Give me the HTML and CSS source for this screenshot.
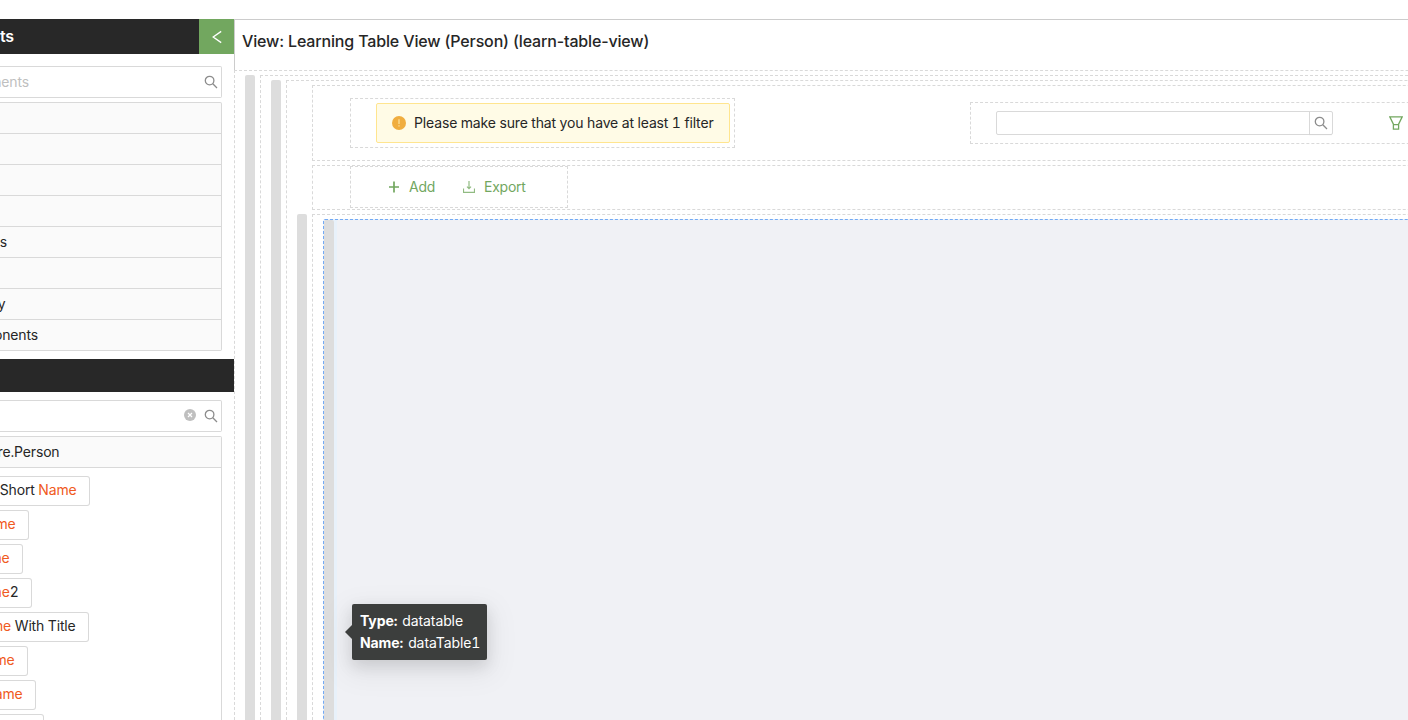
FILE: index.html
```html
<!DOCTYPE html>
<html lang="en">
<head>
<meta charset="utf-8">
<title>View: Learning Table View (Person)</title>
<link rel="stylesheet" href="styles.css">
</head>
<body>
<div class="app">
  <aside class="sidebar">
    <header class="side-head">
      <div class="side-title"><span class="clip e14">ts</span></div>
      <button class="collapse"><svg width="14" height="14" viewBox="0 0 14 14"><path d="M11.2 1.4 3.2 7l8 5.6" fill="none" stroke="#fff" stroke-width="1.3"/></svg></button>
    </header>
    <div class="search">
      <span class="clip e29 muted">nents</span>
      <svg class="lens" viewBox="0 0 14 14"><circle cx="5.6" cy="5.6" r="4.3"/><path d="m8.8 8.8 4.2 4.2"/></svg>
    </div>
    <ul class="groups">
      <li></li><li></li><li></li><li></li>
      <li><span class="clip e7">s</span></li>
      <li></li>
      <li><span class="clip e5">y</span></li>
      <li><span class="clip e38">onents</span></li>
    </ul>
    <div class="side-divider"></div>
    <div class="search">
      <svg class="clear" viewBox="0 0 12 12"><circle cx="6" cy="6" r="6"/><path d="m4 4 4 4M8 4 4 8"/></svg>
      <svg class="lens" viewBox="0 0 14 14"><circle cx="5.6" cy="5.6" r="4.3"/><path d="m8.8 8.8 4.2 4.2"/></svg>
    </div>
    <section class="fields">
      <h3><span class="clip e59">re.Person</span></h3>
      <div class="chips">
        <div class="chip c90"><span>Short <b>Name</b></span></div>
        <div class="chip c29"><span><b>me</b></span></div>
        <div class="chip c23"><span><b>me</b></span></div>
        <div class="chip c32"><span><b>me</b>2</span></div>
        <div class="chip c89"><span><b>me</b> With Title</span></div>
        <div class="chip c28"><span><b>me</b></span></div>
        <div class="chip c36"><span><b>ame</b></span></div>
        <div class="chip c44"></div>
      </div>
    </section>
  </aside>
  <main class="main">
    <h1 class="view-title"><span>View: Learning Table View (Person) (learn-table-view)</span></h1>
    <div class="zone">
      <i class="handle"></i>
      <div class="zone">
        <i class="handle"></i>
        <div class="zone stack">
          <div class="row row-top">
            <div class="cell cell-alert">
              <div class="alert">
                <svg width="14" height="14" viewBox="0 0 14 14"><circle cx="7" cy="7" r="7" fill="#f0ad3f"/><path d="M7 3.3v4.6M7 9.2v1.3" stroke="#fbdf9a" stroke-width="1.3"/></svg>
                <span>Please make sure that you have at least 1 filter</span>
              </div>
            </div>
            <div class="cell cell-search">
              <div class="quick">
                <span class="quick-btn"><svg class="lens" viewBox="0 0 14 14"><circle cx="5.6" cy="5.6" r="4.3"/><path d="m8.8 8.8 4.2 4.2"/></svg></span>
              </div>
              <svg width="14" height="14" viewBox="0 0 14 14" fill="none" stroke="#72a75f" stroke-width="1.3"><path d="M.8.8h12.4L9.6 8.2v5H4.4v-5zM4.4 8.6h5.2"/></svg>
            </div>
          </div>
          <div class="row row-tools">
            <div class="cell cell-tools">
              <span class="tool"><svg width="12" height="12" viewBox="0 0 12 12"><path d="M6 .5v11M1 6h10" stroke="#72a75f" stroke-width="1.7"/></svg><span>Add</span></span>
              <span class="tool"><svg width="12" height="12" viewBox="0 0 12 12" fill="none" stroke="#91bb82" stroke-width="1.2"><path d="M6 0v7.5M4 5.6l2 2 2-2M.5 7.5v3.8h11V7.5"/></svg><span>Export</span></span>
            </div>
          </div>
          <div class="table-wrap">
            <i class="handle"></i>
            <div class="zone table-zone">
              <div class="selected"><i class="handle"></i>
                <div class="table-body"></div>
              </div>
            </div>
          </div>
        </div>
      </div>
    </div>
  </main>
  <div class="tooltip"><div><strong>Type:</strong> datatable</div><div><strong>Name:</strong> dataTable1</div></div>
</div>
</body>
</html>
```
FILE: styles.css
```css
* { box-sizing: border-box; }
html, body { margin: 0; height: 100%; overflow: hidden; }
body { background: #fff; color: #262626; font: 14px/22px Inter, sans-serif; letter-spacing: -0.15px; font-variant-numeric: tabular-nums; }
.app { display: flex; height: 720px; padding-top: 19px; overflow: hidden; position: relative; }
svg { display: block; flex: none; }
b { font-weight: 400; color: #f05a22; }

/* sidebar */
.sidebar { width: 234px; flex: none; overflow: hidden; }
.side-head { display: flex; height: 35px; margin-bottom: 12px; background: #282828; color: #fff; }
.side-title { flex: 1; display: flex; align-items: center; padding-bottom: 2px; font-size: 16px; font-weight: 600; }
.collapse { width: 35px; padding: 0; border: 0; background: #72a75f; display: flex; align-items: center; justify-content: center; }
.clip { display: flex; justify-content: flex-end; white-space: nowrap; flex: none; }
.e5 { width: 5.5px; } .e7 { width: 7px; } .e14 { width: 14px; } .e29 { width: 29px; } .e38 { width: 38px; } .e59 { width: 59.5px; }
.search { display: flex; align-items: center; height: 32px; width: 222px; border: 1px solid #d9d9d9; border-left: 0; border-radius: 0 2px 2px 0; padding-right: 3px; }
.muted { color: #bfbfbf; }
.lens { width: 14px; height: 14px; fill: none; stroke: #8c8c8c; stroke-width: 1.3; }
.search .lens { margin-left: auto; }
.clear { width: 12px; height: 12px; fill: #bfbfbf; margin: -2px 8px 0 auto; }
.clear path { stroke: #fff; stroke-width: 1.2; }
.search .clear + .lens { margin-left: 0; }
.groups { list-style: none; margin: 4px 0 8px; padding: 0; width: 222px; border: 1px solid #d9d9d9; border-left: 0; border-radius: 0 2px 2px 0; background: #fafafa; }
.groups li { height: 31px; display: flex; align-items: center; border-bottom: 1px solid #d9d9d9; }
.groups li:last-child { border-bottom: 0; height: 30px; }
.side-divider { height: 33px; margin-bottom: 8px; background: #282828; }
.fields { margin-top: 4px; width: 222px; height: 400px; border: 1px solid #d9d9d9; border-left: 0; border-top-right-radius: 2px; }
.fields h3 { margin: 0; height: 31px; font-size: 14px; font-weight: 400; display: flex; align-items: center; background: #fafafa; border-bottom: 1px solid #d9d9d9; }
.chips { display: flex; flex-direction: column; gap: 4px; padding-top: 8px; }
.chip { height: 30px; padding-right: 12.4px; padding-bottom: 2px; border: 1px solid #d9d9d9; border-left: 0; border-radius: 0 3px 3px 0; display: flex; align-items: center; justify-content: flex-end; white-space: nowrap; }
.c90 { width: 90px; } .c29 { width: 29px; } .c23 { width: 23px; } .c32 { width: 32px; } .c89 { width: 89px; } .c28 { width: 28px; } .c36 { width: 36px; } .c44 { width: 44px; }

/* canvas */
.main { width: 1500px; flex: none; display: flex; flex-direction: column; }
.view-title { margin: 0; height: 51px; padding: 9px 7px; border-top: 1px solid #ccc; border-left: 1px solid #ccc; font-size: 16px; line-height: 24px; font-weight: 500; letter-spacing: -0.15px; font-variant-numeric: normal; }
.zone { flex: 1; display: flex; gap: 5px; padding: 4px 0 0 10px; border: 1px dashed #d9d9d9; border-bottom: 0; }
.handle { width: 10px; flex: none; background: #ddd; border-radius: 2px 2px 0 0; }
.stack { flex-direction: column; gap: 4px; padding-left: 10px; }
.row { margin-left: 15px; border: 1px dashed #d9d9d9; padding-left: 37px; display: flex; flex: none; }
.row-top { height: 76px; padding-top: 12px; align-items: flex-start; }
.cell { border: 1px dashed #d9d9d9; display: flex; flex: none; }
.cell-alert { width: 385px; height: 50px; padding: 4px 4px 4px 25px; }
.alert { flex: 1; display: flex; align-items: center; gap: 8px; padding-left: 15px; background: #fffbe6; border: 1px solid #ffe58f; border-radius: 2px; white-space: nowrap; }
.cell-search { width: 500px; height: 42px; margin: 4px 0 0 235px; padding-left: 25px; align-items: center; gap: 56px; }
.quick { width: 337px; height: 24px; border: 1px solid #d9d9d9; border-radius: 2px; display: flex; justify-content: flex-end; }
.quick-btn { width: 23px; border-left: 1px solid #d9d9d9; display: flex; align-items: center; justify-content: center; box-shadow: 0 2px 0 rgba(0,0,0,.015); }
.row-tools { height: 45px; }
.cell-tools { width: 218px; height: 42px; padding-left: 37px; align-items: center; gap: 28px; }
.tool { display: flex; align-items: center; gap: 9px; color: #72a75f; letter-spacing: -0.25px; }
.table-wrap { flex: 1; display: flex; gap: 5px; }
.table-zone { padding-left: 10px; }
.selected { flex: 1; display: flex; border: 1px dashed #72a9f5; border-bottom: 0; background: #e8f1fa; border-top-left-radius: 2px; }
.table-body { flex: 1; margin-left: 3px; background: #f0f1f5; }

/* floating label of the selected component */
.tooltip { position: absolute; left: 352px; top: 604px; width: 135px; height: 56px; padding: 6px 8px; background: #3c3e3d; color: #fff; border-radius: 2px; white-space: nowrap; letter-spacing: -0.1px; box-shadow: 0 6px 16px rgba(0,0,0,.12), 0 9px 28px 8px rgba(0,0,0,.05); }
.tooltip::before { content: ""; position: absolute; left: -7px; top: 21px; border: 7px solid transparent; border-left: 0; border-right-color: #3c3e3d; }
.tooltip strong { font-weight: 700; margin-right: 1.3px; }
```
